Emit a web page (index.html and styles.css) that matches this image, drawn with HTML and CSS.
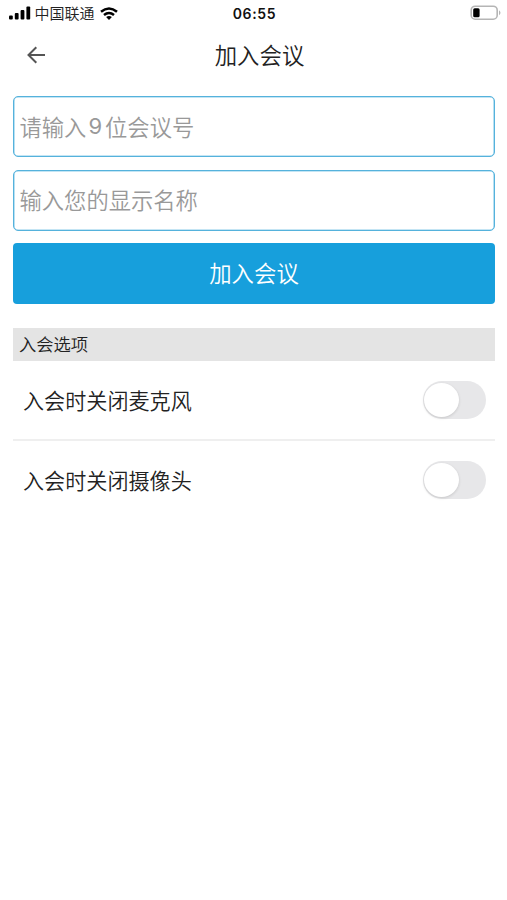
FILE: index.html
```html
<!DOCTYPE html>
<html lang="zh-CN">
<head>
<meta charset="utf-8">
<title>加入会议</title>
<link rel="stylesheet" href="styles.css">
</head>
<body>
<div class="status">
  <div class="carrier">
    <svg class="signal" width="22" height="14" viewBox="0 0 22 14"><rect x="0" y="9.5" width="3.8" height="4" rx="1"/><rect x="5.8" y="7" width="3.8" height="6.5" rx="1"/><rect x="11.6" y="4" width="3.8" height="9.5" rx="1"/><rect x="17.4" y="0.5" width="3.8" height="13" rx="1"/></svg>
    <span class="carrier-name">中国联通</span>
    <svg class="wifi" width="18" height="13" viewBox="0 0 18 13"><g fill="none" stroke="#000" stroke-width="2.5"><path d="M1 4.8Q9-1.9 17 4.8"/><path d="M4 8Q9 3.9 14 8"/></g><path d="M6.1 10.1Q9 8 11.9 10.1L9 13Z"/></svg>
  </div>
  <span class="clock">06:55</span>
  <svg class="battery" width="32" height="16" viewBox="0 0 32 16"><rect x="1.2" y="1.2" width="26" height="13" rx="4" fill="#fff" stroke="#b5b5b5" stroke-width="1.6"/><rect x="3.2" y="3.2" width="6.4" height="9" rx="1.5"/><path d="M29 5.2Q32 7.7 29 10.2Z" fill="#b5b5b5"/></svg>
</div>
<header class="nav">
  <svg class="back" width="19" height="18" viewBox="0 0 19 18"><path d="M18 9H1.8M9.3 1.2L1.5 9L9.3 16.8" fill="none" stroke="#555" stroke-width="2"/></svg>
  <h1 class="title">加入会议</h1>
</header>
<main class="content">
  <div class="field"><span>请输入</span><span class="digit">9</span><span>位会议号</span></div>
  <div class="field">输入您的显示名称</div>
  <div class="join">加入会议</div>
  <h2 class="section">入会选项</h2>
  <div class="option"><span>入会时关闭麦克风</span><div class="switch"><div class="knob"></div></div></div>
  <div class="option"><span>入会时关闭摄像头</span><div class="switch"><div class="knob"></div></div></div>
</main>
</body>
</html>
```
FILE: styles.css
```css
* { box-sizing: border-box; }
body {
  margin: 0;
  height: 900px;
  background: #fff;
  color: #222;
  font-family: "Noto Sans CJK SC", sans-serif;
  font-weight: 350;
}
.status {
  height: 28px;
  display: grid;
  grid-template-columns: 1fr auto 1fr;
  align-items: center;
  padding: 0 5px 0 9px;
}
.carrier { display: flex; align-items: center; margin-bottom: 2px; }
.carrier-name { margin: 0 5.5px 0 3.5px; font-size: 15px; line-height: 26px; }
.clock {
  font: 600 14px/28px Inter, sans-serif;
  letter-spacing: 0.65px;
  margin-left: -2px;
  color: #111;
}
.battery { justify-self: end; margin-bottom: 2px; }
.nav {
  height: 56px;
  display: grid;
  grid-template-columns: 1fr auto 1fr;
  align-items: center;
  padding: 0 14px 2px 27px;
}
.title {
  grid-column: 2;
  margin: -2px 0 0 -1px;
  font-size: 22.4px;
  line-height: 32px;
  font-weight: 350;
}
.content { padding: 12px 12px 0 13px; }
.field {
  height: 61px;
  margin-bottom: 12.5px;
  padding: 0 0 2px 5.5px;
  display: flex;
  align-items: center;
  border: 1px solid #55b2dc;
  border-radius: 5px;
  box-shadow: inset 0 0 0 0.6px #8accea;
  color: #999;
  font-size: 22.3px;
}
.digit {
  margin: 0 3px 0 2px;
  font-family: Inter, sans-serif;
  font-size: 22px;
  font-weight: 400;
}
.join {
  height: 61px;
  border-radius: 4px;
  background: #179fdc;
  color: #fff;
  font-size: 22.4px;
  line-height: 59px;
  text-align: center;
}
.section {
  height: 33px;
  margin: 24px 0 0;
  padding-left: 6px;
  background: #e4e4e4;
  font-size: 17.3px;
  line-height: 32px;
  font-weight: 350;
}
.option {
  height: 78px;
  padding: 0 9.5px 0 10px;
  display: flex;
  align-items: center;
  justify-content: space-between;
  font-size: 21.1px;
}
.option span { margin-top: -1px; }
.option + .option { height: 80px; border-top: 2px solid #efefef; }
.switch {
  width: 63px;
  height: 38px;
  padding: 2px 1.5px;
  border-radius: 19px;
  background: #e7e7e9;
}
.knob {
  width: 35px;
  height: 34px;
  border-radius: 50%;
  background: #fff;
  box-shadow: 0 1px 3px rgba(0, 0, 0, 0.14);
}
```
